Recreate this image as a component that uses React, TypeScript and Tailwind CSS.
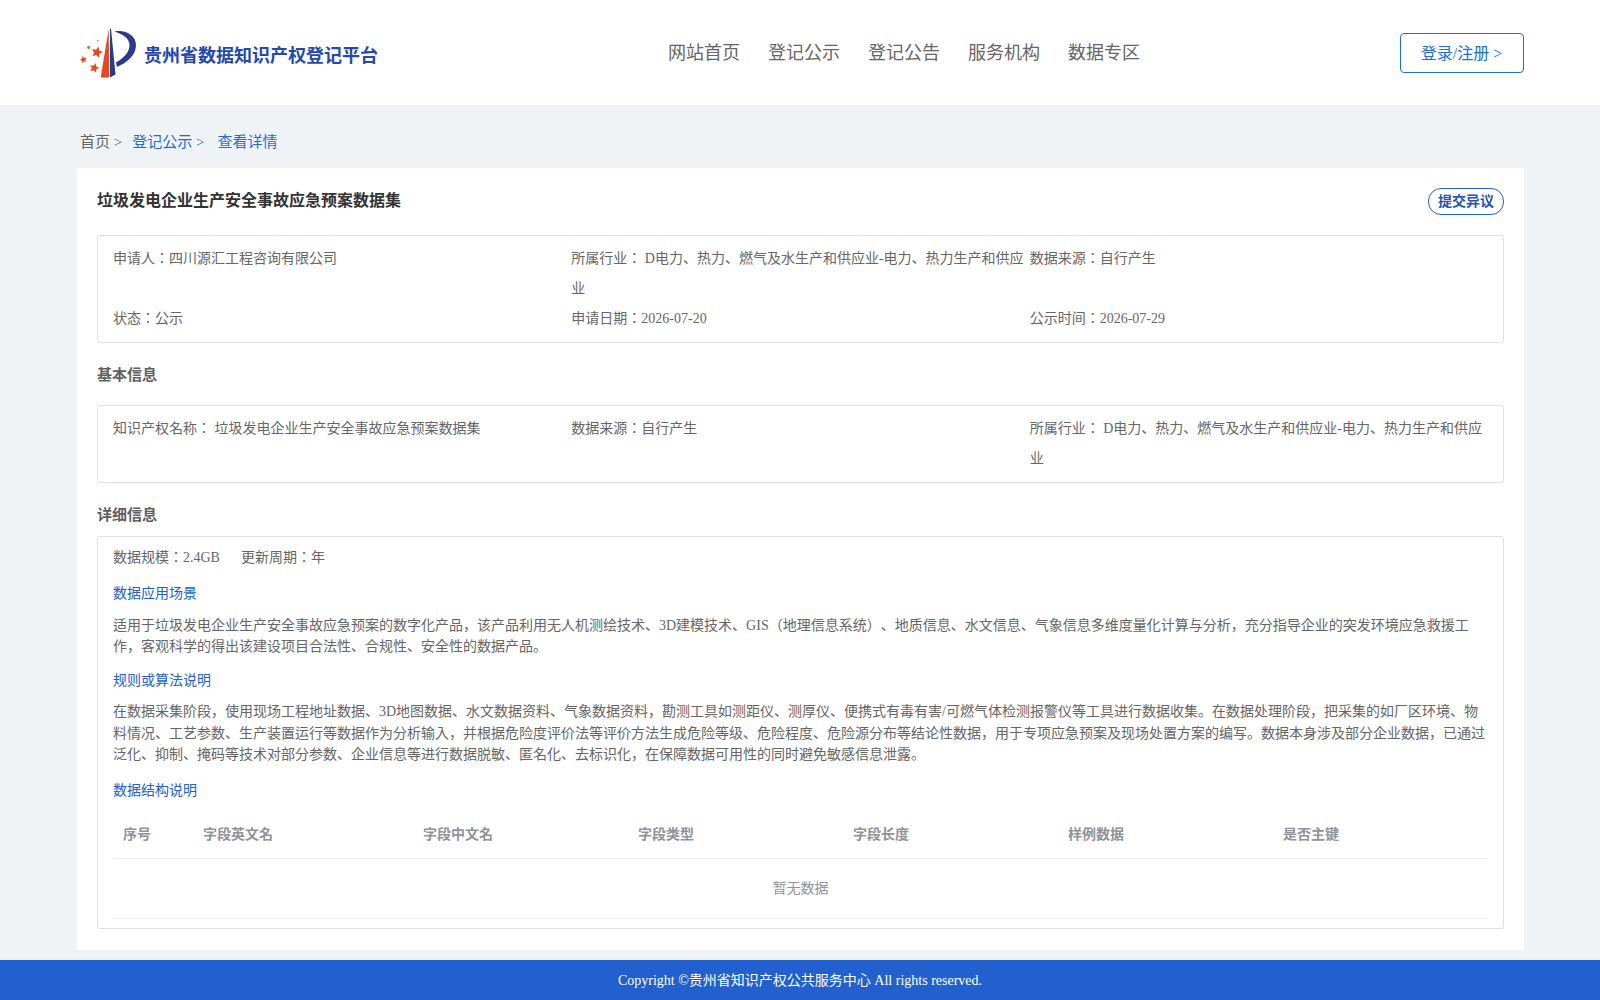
const navItems = ["网站首页", "登记公示", "登记公告", "服务机构", "数据专区"]
const columns = [
  { name: "序号", width: "w-[80px]" },
  { name: "字段英文名", width: "w-[220px]" },
  { name: "字段中文名", width: "w-[215px]" },
  { name: "字段类型", width: "w-[215px]" },
  { name: "字段长度", width: "w-[215px]" },
  { name: "样例数据", width: "w-[215px]" },
  { name: "是否主键", width: "flex-1" },
]

function starPoints(cx: number, cy: number, r: number, tilt: number) {
  const pts: string[] = []
  for (let i = 0; i < 10; i++) {
    const rad = i % 2 === 0 ? r : r * 0.45
    const a = ((-90 + tilt + i * 36) * Math.PI) / 180
    pts.push(`${(cx + rad * Math.cos(a)).toFixed(2)},${(cy + rad * Math.sin(a)).toFixed(2)}`)
  }
  return pts.join(" ")
}

function Logo() {
  return (
    <svg width="60" height="52" viewBox="0 0 60 52" className="shrink-0">
      <polygon points="20.7,51.5 28.7,2.7 29.2,51.5" fill="#e8481c" />
      <polygon points="30,2.7 31,2.7 35.5,48.5 30,51.5" fill="#2b3a8c" />
      <path d="M34.5,5.5 C45,3.5 56.5,9 56,20 C55.5,30 46,37 37,41 L36,36.5 C44,32 49.5,26 49.5,19 C49.5,12 42,8 34.5,5.5 Z" fill="#2b3a8c" />
      <polygon points={starPoints(17, 26.3, 6, 15)} fill="#e8481c" />
      <polygon points={starPoints(3.5, 33.7, 3.8, -15)} fill="#e8481c" />
      <polygon points={starPoints(14.3, 42, 5.2, 15)} fill="#e8481c" />
      <circle cx="8.7" cy="21.3" r="1.6" fill="#ee6a3c" />
      <circle cx="17.7" cy="14.7" r="1" fill="#f09070" />
    </svg>
  )
}

export default function App() {
  return (
    <div className="min-h-[1000px] bg-[#eff3f6] text-[14px] text-[#666666] [text-spacing-trim:space-all] font-['Liberation_Serif','Noto_Sans_CJK_JP',serif]">
      {/* Header */}
      <header className="h-[105px] bg-white flex items-start pl-[77px] pr-[76px]">
        <div className="w-[500px] flex items-center pt-[26px] pl-[3px] gap-[4px]">
          <Logo />
          <span className="text-[18px] font-bold text-[#2448b0] mt-[9px]">贵州省数据知识产权登记平台</span>
        </div>
        <nav className="flex-1 flex justify-start gap-[28px] pt-[40px] pl-[91px] text-[18px] leading-[27px]">
          {navItems.map((item) => (
            <a key={item}>{item}</a>
          ))}
        </nav>
        <button className="mt-[33px] w-[124px] h-[40px] pt-[2px] pr-[1px] border border-[#1a6fe0] rounded text-[16px] text-[#1a6fe0] bg-white">
          登录/注册 &gt;
        </button>
      </header>

      <main className="pl-[77px] pr-[76px]">
        {/* Breadcrumb */}
        <div className="h-[63px] pt-[12px] flex items-center pl-[3px] text-[15px]">
          <span>首页 &gt;</span>
          <span className="ml-[10px] text-[#1a6fe0]">登记公示 &gt;</span>
          <span className="ml-[13px] text-[#1a6fe0]">查看详情</span>
        </div>

        <section className="bg-white h-[782px] px-[20px] pt-[20px]">
          <div className="flex justify-between items-start h-[47px]">
            <h1 className="text-[16px] font-bold text-[#333333] leading-[25px]">垃圾发电企业生产安全事故应急预案数据集</h1>
            <button className="w-[76px] h-[27px] border border-[#2260cf] rounded-[13px] text-[14px] font-bold text-[#2255b8] bg-white">
              提交异议
            </button>
          </div>

          {/* Summary */}
          <div className="border border-[#dcdfe6] rounded-[3px] px-[15px] py-[8px] grid grid-cols-3 leading-[30px]">
            <div>申请人：四川源汇工程咨询有限公司</div>
            <div className="pr-[4px]">所属行业： D电力、热力、燃气及水生产和供应业-电力、热力生产和供应业</div>
            <div>数据来源：自行产生</div>
            <div>状态：公示</div>
            <div>申请日期：2026-07-20</div>
            <div>公示时间：2026-07-29</div>
          </div>

          <h2 className="mt-[20px] mb-[18px] font-bold leading-[24px] text-[15px] text-[#5f5f5f]">基本信息</h2>

          <div className="border border-[#dcdfe6] rounded-[3px] px-[15px] py-[8px] grid grid-cols-3 leading-[30px]">
            <div>知识产权名称： 垃圾发电企业生产安全事故应急预案数据集</div>
            <div>数据来源：自行产生</div>
            <div>所属行业： D电力、热力、燃气及水生产和供应业-电力、热力生产和供应业</div>
          </div>

          <h2 className="mt-[20px] mb-[9px] font-bold leading-[24px] text-[15px] text-[#5f5f5f]">详细信息</h2>

          {/* Details */}
          <div className="border border-[#dcdfe6] rounded-[3px] px-[15px] pt-[9px] pb-[9px]">
            <div className="flex gap-[21px] leading-[24px]">
              <span>数据规模：2.4GB</span>
              <span>更新周期：年</span>
            </div>
            <h3 className="mt-[12px] text-[#2260cf] leading-[24px]">数据应用场景</h3>
            <p className="mt-[9px] leading-[21px]">
              适用于垃圾发电企业生产安全事故应急预案的数字化产品，该产品利用无人机测绘技术、3D建模技术、GIS（地理信息系统）、地质信息、水文信息、气象信息多维度量化计算与分析，充分指导企业的突发环境应急救援工作，客观科学的得出该建设项目合法性、合规性、安全性的数据产品。
            </p>
            <h3 className="mt-[12px] text-[#2260cf] leading-[24px]">规则或算法说明</h3>
            <p className="mt-[8px] leading-[21.5px]">
              在数据采集阶段，使用现场工程地址数据、3D地图数据、水文数据资料、气象数据资料，勘测工具如测距仪、测厚仪、便携式有毒有害/可燃气体检测报警仪等工具进行数据收集。在数据处理阶段，把采集的如厂区环境、物料情况、工艺参数、生产装置运行等数据作为分析输入，并根据危险度评价法等评价方法生成危险等级、危险程度、危险源分布等结论性数据，用于专项应急预案及现场处置方案的编写。数据本身涉及部分企业数据，已通过泛化、抑制、掩码等技术对部分参数、企业信息等进行数据脱敏、匿名化、去标识化，在保障数据可用性的同时避免敏感信息泄露。
            </p>
            <h3 className="mt-[13px] text-[#2260cf] leading-[24px]">数据结构说明</h3>

            {/* Table */}
            <div className="mt-[9px] flex h-[47px] items-center border-b border-[#ebeef5] font-bold text-[#909399]">
              {columns.map((col) => (
                <div key={col.name} className={`${col.width} pl-[10px]`}>
                  {col.name}
                </div>
              ))}
            </div>
            <div className="h-[60px] flex items-center justify-center border-b border-[#ebeef5] text-[#909399]">暂无数据</div>
          </div>
        </section>
      </main>

      <footer className="mt-[10px] h-[40px] bg-[#2260cf] flex items-center justify-center text-white text-[14px]">
        Copyright ©贵州省知识产权公共服务中心 All rights reserved.
      </footer>
    </div>
  )
}
